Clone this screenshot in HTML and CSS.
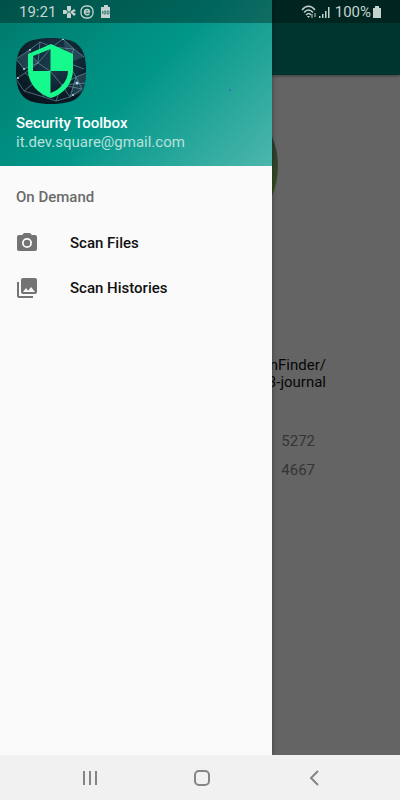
FILE: index.html
```html
<!doctype html>
<html lang="en">
  <head>
    <meta charset="UTF-8" />
    <meta name="viewport" content="width=device-width, initial-scale=1.0" />
    <title>Security Toolbox</title>
    <link rel="stylesheet" href="styles.css">
  </head>

  <body>
    <div class="app">
      <header class="app-bar"></header>

      <main class="scan">
        <div class="scan-circle"></div>
        <p class="scan-path">nFinder/<br>3-journal</p>
        <div class="scan-counts">
          <span>5272</span>
          <span>4667</span>
        </div>
      </main>

      <div class="scrim"></div>

      <aside class="drawer">
        <div class="drawer-header">
          <svg class="logo" viewBox="0 0 70 68" aria-hidden="true">
            <defs>
              <clipPath id="logo-shape">
                <path d="M35 1C61 1 70 9 70 34S61 67 35 67S0 59 0 34S9 1 35 1Z" />
              </clipPath>
              <radialGradient id="logo-glow" cx="0.55" cy="0.35" r="0.7">
                <stop offset="0" stop-color="#1d4052" />
                <stop offset="1" stop-color="#07121b" />
              </radialGradient>
            </defs>
            <g clip-path="url(#logo-shape)">
              <rect width="70" height="68" fill="url(#logo-glow)" />
              <g fill="#5f9db5" opacity="0.25">
                <path d="M0 22L12 14L22 26L8 32ZM47 2L58 12L68 20L52 26ZM60 40L70 36L70 54L54 60Z" />
              </g>
              <g fill="none" stroke="#7fb2c6" stroke-width="0.7" opacity="0.75">
                <path d="M0 22L12 14L22 26L8 32L0 22M12 14L24 5L36 10L47 2L58 12L68 20M24 5L22 26L36 10L58 12L52 26L68 32" />
                <path d="M0 42L9 36L20 44L8 54L0 42M20 44L28 60L8 54M9 36L22 26L34 34L52 26L60 40L70 36" />
                <path d="M34 34L46 48L60 40L66 52L46 48L40 64L28 60M60 40L54 60L66 52M40 64L54 60L46 48L70 46" />
              </g>
              <g fill="#b7dbe6">
                <circle cx="8" cy="32" r="1" />
                <circle cx="14" cy="13" r="1" />
                <circle cx="47" cy="2" r="1" />
                <circle cx="61" cy="46" r="1.5" />
                <circle cx="57" cy="58" r="1" />
                <circle cx="2" cy="41" r="1" />
              </g>
            </g>
            <path fill="#16f98c" fill-rule="evenodd" d="M35 7L57 17V33C57 46 48 57 35 61C22 57 12 46 12 33V17ZM34.500 12L17 19V34H34.500ZM34.500 34V56C44 53 52 44 52 34Z" />
          </svg>
          <div class="account-name">Security Toolbox</div>
          <div class="account-mail">it.dev.square@gmail.com</div>
          <span class="header-dot"></span>
        </div>

        <nav class="menu">
          <h2 class="menu-title">On Demand</h2>
          <a class="menu-item" href="#files">
            <svg viewBox="0 0 24 24" aria-hidden="true">
              <path fill-rule="evenodd" d="M9 2L7.170 4H4C2.900 4 2 4.900 2 6V18C2 19.100 2.900 20 4 20H20C21.100 20 22 19.100 22 18V6C22 4.900 21.100 4 20 4H16.830L15 2ZM12 17A5 5 0 1 1 12 7A5 5 0 0 1 12 17ZM12 15.200A3.200 3.200 0 1 0 12 8.800A3.200 3.200 0 0 0 12 15.200Z" />
            </svg>
            <span>Scan Files</span>
          </a>
          <a class="menu-item" href="#histories">
            <svg viewBox="0 0 24 24" aria-hidden="true">
              <path d="M22 16V4c0-1.100-.9-2-2-2H8c-1.100 0-2 .9-2 2v12c0 1.100.9 2 2 2h12c1.100 0 2-.9 2-2zm-11-4l2.030 2.710L16 11l4 5H8l3-4zM2 6v14c0 1.100.9 2 2 2h14v-2H4V6H2z" />
            </svg>
            <span>Scan Histories</span>
          </a>
        </nav>
      </aside>

      <div class="status-bar">
        <span>19:21</span>
        <svg class="status-notices" viewBox="0 0 50 16" aria-hidden="true">
          <g fill="currentColor">
            <path d="M5 2H9V6L7 8L5 6ZM5 14H9V10L7 8L5 10ZM1 6H4L6 8L4 10H1ZM12 5L14 7L11 8L14 10L12 12L8 8Z" />
            <path d="M39 3H42V1H46V3H48V14H39Z" />
          </g>
          <rect x="19" y="2" width="12" height="12" rx="5" fill="none" stroke="currentColor" stroke-width="1.300" />
          <path d="M22.500 8H27.500C27.500 4.500 22.500 4.500 22.500 8C22.500 11 26 11.500 27.300 9.800" fill="none" stroke="currentColor" stroke-width="1.500" />
          <path d="M40.500 7V10M42 7H43.700V10H42ZM45.200 7H47V10H45.200Z" fill="none" stroke="#00534a" stroke-width="0.600" />
        </svg>
        <svg class="status-signal" viewBox="0 0 30 16" aria-hidden="true">
          <g fill="none" stroke="currentColor" stroke-width="1.500">
            <path d="M1 6C5 1 10 1 14 6M3 8.500C6 5 9 5 12 8.500M5 11C7 9 8.500 9 10 11" />
            <path d="M11 10V14M14 9V13" stroke-width="1" />
          </g>
          <path d="M6 12L7.500 14L9 12ZM18 12H19.500V14H18ZM21 10H22.500V14H21ZM24 7H25.500V14H24ZM27 3H28.500V14H27Z" fill="currentColor" />
        </svg>
        <span>100%</span>
        <svg class="status-battery" viewBox="0 0 8 12" aria-hidden="true">
          <path d="M0 2H2V0H6V2H8V12H0Z" fill="currentColor" />
        </svg>
      </div>
    </div>

    <footer class="nav-bar">
      <button aria-label="Recent apps">
        <svg viewBox="0 0 16 16"><path d="M2 1V15M8 1V15M14 1V15" /></svg>
      </button>
      <button aria-label="Home">
        <svg viewBox="0 0 16 16"><rect x="1" y="1" width="14" height="14" rx="4" /></svg>
      </button>
      <button aria-label="Back">
        <svg viewBox="0 0 16 16"><path d="M12 1L5 8L12 15" /></svg>
      </button>
    </footer>
  </body>
</html>
```

FILE: styles.css
```css
:root {
  --primary-color: #009688;
  --drawer-bg: #fafafa;
  --nav-bg: #f1f1f1;
  --icon-color: #737373;
  --drawer-width: 68%;
  --status-height: 23px;
}

* {
  margin: 0;
  padding: 0;
  box-sizing: border-box;
}

body {
  min-height: 100vh;
  display: flex;
  flex-direction: column;
  font-family: Roboto, sans-serif;
  font-size: 15px;
  line-height: 18px;
}

.app {
  flex: 1;
  display: flex;
  flex-direction: column;
  position: relative;
  overflow: hidden;
  background: var(--drawer-bg);
}

.app-bar {
  height: 75px;
  background: #008577;
  box-shadow: 0 1px 3px rgba(0, 0, 0, 0.4);
}

.scan {
  display: flex;
  flex-direction: column;
  padding-top: 13px;
}

.scan-circle {
  width: 156px;
  height: 156px;
  align-self: center;
  border-radius: 50%;
  background: linear-gradient(#6f9c88 30%, #8bc34a 70%);
}

.scan-path {
  margin-top: 113px;
  padding-right: 74px;
  line-height: 17px;
  text-align: right;
  color: #111111;
}

.scan-counts {
  display: flex;
  flex-direction: column;
  gap: 11px;
  margin-top: 41px;
  padding-right: 85px;
  text-align: right;
  color: #858585;
}

.scrim {
  position: absolute;
  inset: 0;
  background: rgba(0, 0, 0, 0.6);
}

.drawer {
  position: absolute;
  top: 0;
  bottom: 0;
  left: 0;
  width: var(--drawer-width);
  background: var(--drawer-bg);
  box-shadow: 0 0 5px rgba(0, 0, 0, 0.4);
}

.drawer-header {
  position: relative;
  height: 166px;
  padding: 37px 16px 0;
  color: #ffffff;
  background: linear-gradient(135deg, #00796b, var(--primary-color) 50%, #4db6ac);
}

.logo {
  display: block;
  width: 70px;
  height: 68px;
  margin-bottom: 9px;
}

.account-name {
  font-weight: 500;
}

.account-mail {
  line-height: 21px;
  color: #b8e0dc;
}

.header-dot {
  position: absolute;
  top: 89px;
  right: 41px;
  width: 2px;
  height: 2px;
  background: #3f6fb5;
}

.menu {
  padding-top: 8px;
}

.menu-title {
  padding: 14px 16px;
  font-size: 15px;
  font-weight: 500;
  color: #6b6b6b;
}

.menu-item {
  display: flex;
  align-items: center;
  gap: 31px;
  height: 45px;
  padding: 0 15px;
  font-weight: 500;
  color: #111111;
  text-decoration: none;
}

.menu-item svg {
  width: 24px;
  height: 24px;
  fill: var(--icon-color);
}

.status-bar {
  position: absolute;
  top: 0;
  left: 0;
  right: 0;
  height: var(--status-height);
  display: flex;
  align-items: center;
  padding: 0 19px;
  color: #c4d3d0;
  background: rgba(0, 0, 0, 0.32);
}

.status-notices {
  width: 50px;
  height: 16px;
  margin-left: 6px;
}

.status-signal {
  width: 30px;
  height: 16px;
  margin: 0 4px 0 auto;
}

.status-battery {
  width: 8px;
  height: 12px;
  margin-left: 2px;
}

.nav-bar {
  display: flex;
  justify-content: space-around;
  height: 45px;
  padding: 0 30px 0 34px;
  background: var(--nav-bg);
}

.nav-bar button {
  width: 48px;
  display: flex;
  align-items: center;
  justify-content: center;
  border: none;
  background: none;
}

.nav-bar svg {
  width: 16px;
  height: 16px;
  fill: none;
  stroke: #858585;
  stroke-width: 2;
}
```
